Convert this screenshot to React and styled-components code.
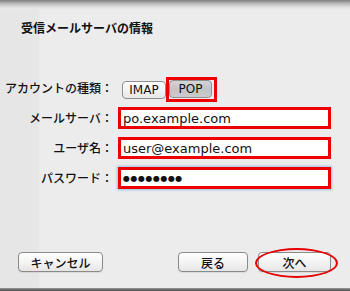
import React from "react";
import styled, { createGlobalStyle } from "styled-components";

const Global = createGlobalStyle`
  html, body { margin: 0; padding: 0; background: #ebebeb; }
  body { font-family: "DejaVu Sans", "Noto Sans CJK JP", sans-serif; }
`;

const JP = `"Noto Sans CJK JP", "DejaVu Sans", sans-serif`;
const LATIN = `"DejaVu Sans", "Noto Sans CJK JP", sans-serif`;

const Window = styled.div`
  position: relative;
  width: 350px;
  height: 291px;
  overflow: hidden;
  background: linear-gradient(90deg, #e6e6e6 0, #e6e6e6 38px, #ececec 40px);
  display: flex;
  flex-direction: column;
`;

const TopShadow = styled.div`
  height: 10px;
  flex: none;
  background: linear-gradient(#7d7d7d, #b9b9b9 35%, #e2e2e2 75%, #ececec);
`;

const Sheet = styled.div`
  flex: 1;
  display: flex;
  flex-direction: column;
`;

const Title = styled.h1`
  margin: 10px 0 0 21px;
  font-family: ${JP};
  font-size: 12px;
  font-weight: 700;
  line-height: 16px;
  color: #111;
`;

const Form = styled.div`
  margin-top: 41px;
  display: grid;
  grid-template-columns: 113px 1fr;
  column-gap: 5px;
  row-gap: 8px;
  align-items: center;
`;

const Label = styled.div`
  font-family: ${JP};
  font-size: 12px;
  font-weight: 500;
  color: #111;
  text-align: right;
  white-space: nowrap;
  line-height: 16px;
`;

const Segs = styled.div`
  display: flex;
  align-items: center;
  margin: 0 0 -3px 4px;
`;

const SegButton = styled.div`
  box-sizing: border-box;
  width: ${(p) => p.$w}px;
  height: 18px;
  display: flex;
  align-items: center;
  justify-content: center;
  border: 1px solid #8f8f8f;
  border-radius: 4px;
  font-family: ${LATIN};
  font-size: 12px;
  color: #111;
  background: ${(p) =>
    p.$pressed
      ? "linear-gradient(#d4d4d4, #c4c4c4 50%, #cbcbcb)"
      : "linear-gradient(#ffffff, #f3f3f3 50%, #e7e7e7)"};
`;

const RedFrame = styled.div`
  box-sizing: border-box;
  border: 3px solid #ee0000;
  padding: 0 2px 1px 0;
  display: flex;
`;

const Field = styled.div`
  box-sizing: border-box;
  width: 213px;
  height: 22px;
  border: 3px solid #ee0000;
  background: #fff;
  display: flex;
  align-items: center;
  padding-left: 2px;
  font-family: ${LATIN};
  font-size: 13px;
  color: #111;
  box-shadow: ${(p) => (p.$focus ? "0 0 2px 1px rgba(110,160,230,0.6)" : "none")};
`;

const Dots = styled.span`
  font-size: 8px;
  letter-spacing: 0.5px;
  margin-top: 1px;
`;

const Footer = styled.div`
  margin-top: auto;
  margin-bottom: 16px;
  display: flex;
  align-items: center;
  padding: 0 19px 0 18px;
`;

const PushButton = styled.div`
  position: relative;
  box-sizing: border-box;
  width: ${(p) => p.$w}px;
  height: 20px;
  margin-left: ${(p) => p.$ml || 0}px;
  display: flex;
  align-items: center;
  justify-content: center;
  border: 1px solid #8a8a8a;
  border-radius: 4px;
  background: linear-gradient(#ffffff, #f4f4f4 50%, #e6e6e6);
  font-family: ${JP};
  font-size: 12px;
  font-weight: 500;
  color: #111;
  box-shadow: 0 1px 1px rgba(0, 0, 0, 0.08);
`;

const Ellipse = styled.span`
  position: absolute;
  left: -4px;
  top: -5px;
  width: 83px;
  height: 30px;
  box-sizing: border-box;
  border: 2.5px solid #e60000;
  border-radius: 50%;
`;

const Spacer = styled.div`
  flex: 1;
`;

const BottomEdge = styled.div`
  height: 3px;
  flex: none;
  background: linear-gradient(#9a9a9a, #4a4a4a);
`;

export default function App() {
  return (
    <>
      <Global />
      <Window>
        <TopShadow />
        <Sheet>
          <Title>受信メールサーバの情報</Title>
          <Form>
            <Label>アカウントの種類：</Label>
            <Segs>
              <SegButton $w={44}>IMAP</SegButton>
              <RedFrame>
                <SegButton $w={43} $pressed>POP</SegButton>
              </RedFrame>
            </Segs>
            <Label>メールサーバ：</Label>
            <Field>po.example.com</Field>
            <Label>ユーザ名：</Label>
            <Field>user@example.com</Field>
            <Label>パスワード：</Label>
            <Field $focus>
              <Dots>●●●●●●●●</Dots>
            </Field>
          </Form>
          <Footer>
            <PushButton $w={85}>キャンセル</PushButton>
            <Spacer />
            <PushButton $w={70}>戻る</PushButton>
            <PushButton $w={73} $ml={10}>
              次へ
              <Ellipse />
            </PushButton>
          </Footer>
        </Sheet>
        <BottomEdge />
      </Window>
    </>
  );
}
